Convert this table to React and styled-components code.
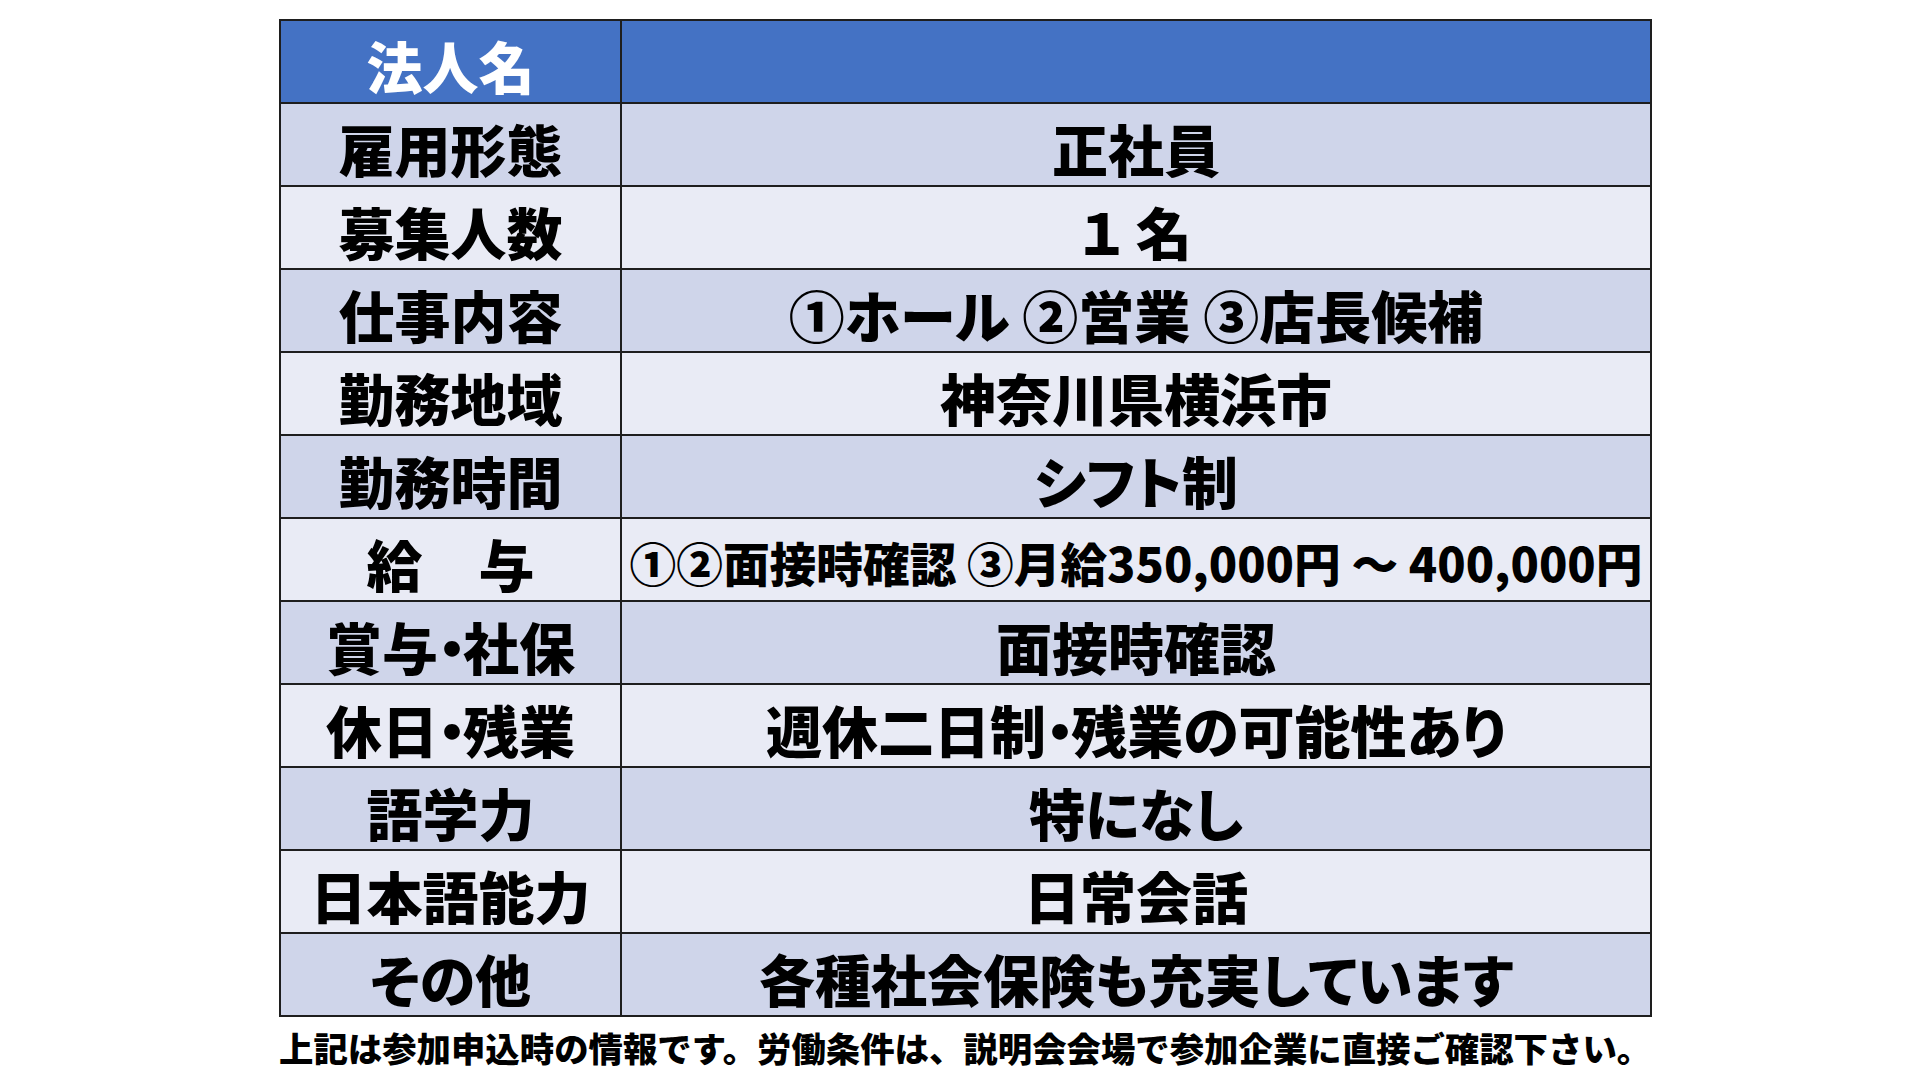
import React from 'react';
import styled, { createGlobalStyle } from 'styled-components';

const GlobalStyle = createGlobalStyle`
  html, body {
    margin: 0;
    padding: 0;
    background: #ffffff;
  }

  body {
    font-family: "Noto Sans CJK JP", "Noto Sans", sans-serif;
  }
`;

const Page = styled.div`
  width: 1920px;
  height: 1080px;
  box-sizing: border-box;
  padding: 19px 0 0 279px;
  font-feature-settings: "palt";
`;

const Table = styled.table`
  width: 1373px;
  border-collapse: collapse;
  table-layout: fixed;
`;

const Row = styled.tr`
  height: 83px;
  background: ${p => p.$head ? '#4472c4' : p.$shade ? '#cfd5ea' : '#e9ebf5'};
`;

const Cell = styled.td`
  border: 2px solid #1e1e1e;
  padding: 6px 0 0;
  text-align: center;
  vertical-align: middle;
  white-space: nowrap;
  font-weight: 900;
  font-size: ${p => p.$size || 56}px;
  line-height: 1;
  color: ${p => p.$head ? '#ffffff' : '#000000'};
  overflow: hidden;
`;

const LabelCell = styled(Cell)`
  width: 339px;
`;

const Dot = styled.span`
  letter-spacing: -0.05em;
`;

const Note = styled.p`
  margin: 13px 0 0;
  font-size: 34.4px;
  font-weight: 900;
  line-height: 1;
  color: #000000;
  white-space: nowrap;
  font-feature-settings: normal;
`;

const rows = [
  ['雇用形態', '正社員'],
  ['募集人数', '１ 名'],
  ['仕事内容', '①ホール ②営業 ③店長候補'],
  ['勤務地域', '神奈川県横浜市'],
  ['勤務時間', 'シフト制'],
  ['給　与', '①②面接時確認 ③月給350,000円 ～ 400,000円', 46.7],
  ['賞与・社保', '面接時確認'],
  ['休日・残業', '週休二日制・残業の可能性あり'],
  ['語学力', '特になし'],
  ['日本語能力', '日常会話'],
  ['その他', '各種社会保険も充実しています'],
];

const withDots = text => text.split('・').flatMap((part, i) => (
  i === 0 ? [part] : [<Dot key={`dot-${i}`}>・</Dot>, part]
));

const App = () => (
  <>
    <GlobalStyle />
    <Page>
      <Table>
        <tbody>
          <Row $head>
            <LabelCell $head>法人名</LabelCell>
            <Cell $head />
          </Row>
          {rows.map(([label, value, size], index) => (
            <Row key={`row-${index}`} $shade={index % 2 === 0}>
              <LabelCell>{withDots(label)}</LabelCell>
              <Cell $size={size}>{withDots(value)}</Cell>
            </Row>
          ))}
        </tbody>
      </Table>
      <Note>上記は参加申込時の情報です。労働条件は、説明会会場で参加企業に直接ご確認下さい。</Note>
    </Page>
  </>
);

export default App;
